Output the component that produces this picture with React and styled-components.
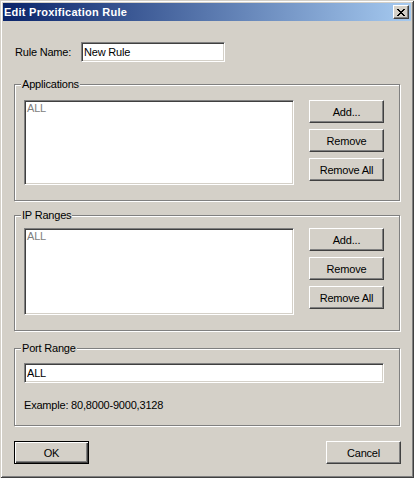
import React from "react";
import styled, { createGlobalStyle, css } from "styled-components";

const GlobalStyle = createGlobalStyle`
  html, body {
    margin: 0;
    padding: 0;
    background: #d4d0c8;
  }
  body {
    font-family: "Liberation Sans", Arial, sans-serif;
    font-size: 11px;
    letter-spacing: -0.2px;
    color: #000;
  }
`;

const raised = css`
  border: 1px solid;
  border-color: #fff #404040 #404040 #fff;
  box-shadow: inset -1px -1px 0 #808080;
`;

const sunken = css`
  border: 1px solid;
  border-color: #808080 #fff #fff #808080;
  box-shadow: inset 1px 1px 0 #404040, inset -1px -1px 0 #d4d0c8;
`;

const Window = styled.div`
  width: 414px;
  height: 478px;
  box-sizing: border-box;
  padding: 3px;
  background: #d4d0c8;
  box-shadow: inset 1px 1px 0 #d4d0c8, inset -1px -1px 0 #404040,
    inset 2px 2px 0 #fff, inset -2px -2px 0 #808080;
  display: flex;
  flex-direction: column;
`;

const TitleBar = styled.div`
  height: 18px;
  display: flex;
  align-items: center;
  justify-content: space-between;
  padding: 0 2px 0 1px;
  background: linear-gradient(to right, #0a246a, #a6caf0);
  color: #fff;
  font-weight: bold;
  letter-spacing: 0.25px;
  line-height: 13px;
`;

const CloseButton = styled.button`
  width: 16px;
  height: 14px;
  box-sizing: border-box;
  padding: 0;
  display: flex;
  align-items: center;
  justify-content: center;
  background: #d4d0c8;
  ${raised}
`;

const Body = styled.div`
  display: flex;
  flex-direction: column;
  padding: 21px 0 0 11px;
`;

const RuleRow = styled.div`
  display: flex;
  align-items: center;
  height: 20px;
  padding-left: 1px;
`;

const RuleLabel = styled.span`
  width: 66px;
  line-height: 13px;
`;

const TextField = styled.input`
  width: ${(p) => p.$width}px;
  height: 20px;
  box-sizing: border-box;
  margin: 0;
  padding: 0 2px;
  background: #fff;
  color: #000;
  font-family: "Liberation Sans", Arial, sans-serif;
  font-size: 11px;
  letter-spacing: -0.2px;
  outline: none;
  ${sunken}
`;

const Group = styled.div`
  position: relative;
  width: 386px;
  box-sizing: border-box;
  margin-top: ${(p) => p.$mt}px;
  padding: ${(p) => p.$pt}px 15px ${(p) => p.$pb}px 9px;
  border: 1px solid #808080;
  box-shadow: inset 1px 1px 0 #fff, 1px 1px 0 #fff;
`;

const GroupLabel = styled.span`
  position: absolute;
  top: -7px;
  left: 6px;
  padding: 0 1px;
  background: #d4d0c8;
  line-height: 13px;
`;

const GroupRow = styled.div`
  display: flex;
  align-items: flex-start;
  gap: 15px;
`;

const ListBox = styled.div`
  width: 270px;
  height: ${(p) => p.$height}px;
  box-sizing: border-box;
  padding: 1px 2px;
  background: #fff;
  color: #808080;
  line-height: 13px;
  ${sunken}
`;

const ButtonColumn = styled.div`
  display: flex;
  flex-direction: column;
  gap: 6px;
`;

const Button = styled.button`
  width: 75px;
  height: 23px;
  box-sizing: border-box;
  padding: 0;
  margin: 0;
  background: #d4d0c8;
  color: #000;
  font-family: "Liberation Sans", Arial, sans-serif;
  font-size: 11px;
  letter-spacing: -0.2px;
  ${(p) =>
    p.$default
      ? css`
          border: 1px solid #000;
          box-shadow: inset 1px 1px 0 #fff, inset -1px -1px 0 #404040,
            inset -2px -2px 0 #808080;
        `
      : raised}
`;

const Hint = styled.div`
  margin-top: 16px;
  line-height: 13px;
`;

const Footer = styled.div`
  width: 387px;
  margin-top: 15px;
  display: flex;
  justify-content: space-between;
`;

const CloseGlyph = () => (
  <svg width="8" height="7" viewBox="0 0 8 7" shapeRendering="crispEdges">
    <path
      fill="#000"
      d="M0 0h2v1H0zM6 0h2v1H6zM1 1h2v1H1zM5 1h2v1H5zM2 2h4v1H2zM3 3h2v1H3zM2 4h4v1H2zM1 5h2v1H1zM5 5h2v1H5zM0 6h2v1H0zM6 6h2v1H6z"
    />
  </svg>
);

const ListSection = ({ title, mt, pt, pb, listHeight }) => (
  <Group $mt={mt} $pt={pt} $pb={pb}>
    <GroupLabel>{title}</GroupLabel>
    <GroupRow>
      <ListBox $height={listHeight}>ALL</ListBox>
      <ButtonColumn>
        <Button>Add...</Button>
        <Button>Remove</Button>
        <Button>Remove All</Button>
      </ButtonColumn>
    </GroupRow>
  </Group>
);

export default function App() {
  return (
    <>
      <GlobalStyle />
      <Window>
        <TitleBar>
          <span>Edit Proxification Rule</span>
          <CloseButton aria-label="Close">
            <CloseGlyph />
          </CloseButton>
        </TitleBar>
        <Body>
          <RuleRow>
            <RuleLabel>Rule Name:</RuleLabel>
            <TextField $width={144} defaultValue="New Rule" />
          </RuleRow>
          <ListSection title="Applications" mt={22} pt={15} pb={15} listHeight={85} />
          <ListSection title="IP Ranges" mt={14} pt={12} pb={15} listHeight={87} />
          <Group $mt={17} $pt={14} $pb={13}>
            <GroupLabel>Port Range</GroupLabel>
            <TextField $width={360} defaultValue="ALL" />
            <Hint>Example: 80,8000-9000,3128</Hint>
          </Group>
          <Footer>
            <Button $default>OK</Button>
            <Button>Cancel</Button>
          </Footer>
        </Body>
      </Window>
    </>
  );
}
